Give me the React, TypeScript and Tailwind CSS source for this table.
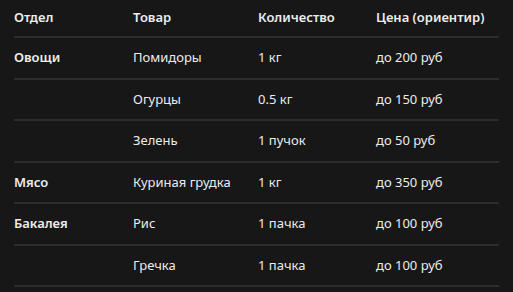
const rows = [
  { dept: "Овощи", item: "Помидоры", qty: "1 кг", price: "до 200 руб" },
  { dept: "", item: "Огурцы", qty: "0.5 кг", price: "до 150 руб" },
  { dept: "", item: "Зелень", qty: "1 пучок", price: "до 50 руб" },
  { dept: "Мясо", item: "Куриная грудка", qty: "1 кг", price: "до 350 руб" },
  { dept: "Бакалея", item: "Рис", qty: "1 пачка", price: "до 100 руб" },
  { dept: "", item: "Гречка", qty: "1 пачка", price: "до 100 руб" },
];

export default function App() {
  return (
    <div className="min-h-screen w-full bg-[#171717] pl-[14px] pt-0 font-['Noto_Sans',sans-serif] text-[13px] text-[#ececec]">
      <table className="w-[485px] table-fixed border-collapse text-left">
        <colgroup>
          <col className="w-[119px]" />
          <col className="w-[125px]" />
          <col className="w-[118px]" />
          <col className="w-[123px]" />
        </colgroup>
        <thead>
          <tr className="h-[37px] border-b-2 border-[#2c2c2c]">
            <th className="p-0 font-semibold">Отдел</th>
            <th className="p-0 font-semibold">Товар</th>
            <th className="p-0 font-semibold">Количество</th>
            <th className="p-0 font-semibold">Цена (ориентир)</th>
          </tr>
        </thead>
        <tbody>
          {rows.map((r, i) => (
            <tr key={i} className="h-[41.5px] border-b-2 border-[#2c2c2c]">
              <td className="p-0 font-semibold">{r.dept}</td>
              <td className="p-0">{r.item}</td>
              <td className="p-0">{r.qty}</td>
              <td className="p-0">{r.price}</td>
            </tr>
          ))}
        </tbody>
      </table>
    </div>
  );
}
